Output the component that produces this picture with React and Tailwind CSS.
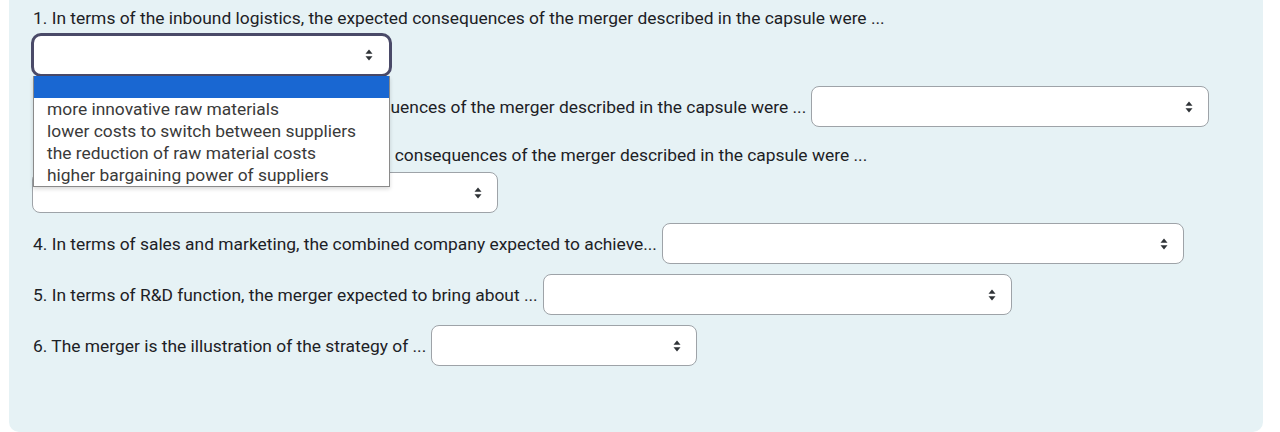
import React from "react";

function Caret() {
  return (
    <svg width="8" height="12" viewBox="0 0 8 12" className="shrink-0">
      <path d="M4 0.5 L7.5 4.8 L0.5 4.8 Z" fill="#2f3337" />
      <path d="M4 11.5 L7.5 7.2 L0.5 7.2 Z" fill="#2f3337" />
    </svg>
  );
}

function Select({ w }) {
  return (
    <div
      className="h-[41px] shrink-0 bg-white border border-[#9ea3a8] rounded-[8px] flex items-center justify-end pr-[15px]"
      style={{ width: w }}
    >
      <Caret />
    </div>
  );
}

export default function App() {
  return (
    <div className="w-[1280px] h-[432px] bg-white overflow-hidden" style={{ fontFamily: "Roboto, 'Liberation Sans', sans-serif" }}>
      <div className="relative ml-[9px] w-[1254px] h-[432px] bg-[#e6f2f5] rounded-b-[10px] pl-[24px] text-[#1d2125] text-[17.4px] leading-[24px]">
        <div className="pt-[6px] whitespace-nowrap">
          1. In terms of the inbound logistics, the expected consequences of the merger described in the capsule were ...
        </div>
        <div className="mt-[3px] ml-[-2px] w-[361px] h-[44px] bg-white border-[3px] border-[#4a4a68] rounded-[10px] flex items-center justify-end pr-[16px]">
          <Caret />
        </div>
        <div className="mt-[9px] flex items-center gap-[5px] whitespace-nowrap">
          <span>2. In terms of operations, the expected consequences of the merger described in the capsule were ...</span>
          <Select w={398} />
        </div>
        <div className="mt-[16px] whitespace-nowrap">
          3. In terms of outbound logistics, the expected consequences of the merger described in the capsule were ...
        </div>
        <div className="mt-[5px] -ml-[1px]">
          <Select w={466} />
        </div>
        <div className="mt-[10px] flex items-center gap-[5px] whitespace-nowrap">
          <span>4. In terms of sales and marketing, the combined company expected to achieve...</span>
          <Select w={522} />
        </div>
        <div className="mt-[10px] flex items-center gap-[5px] whitespace-nowrap">
          <span>5. In terms of R&amp;D function, the merger expected to bring about ...</span>
          <Select w={469} />
        </div>
        <div className="mt-[10px] flex items-center gap-[5px] whitespace-nowrap">
          <span>6. The merger is the illustration of the strategy of ...</span>
          <Select w={266} />
        </div>

        <div className="absolute left-[24px] top-[76px] w-[357px] bg-white border border-t-0 border-[#8a8a8a] shadow-[0_2px_4px_rgba(0,0,0,0.15)] text-[#3a3a3a] text-[17.4px] leading-[22px]">
          <div className="h-[22px] bg-[#1967d2]" />
          <div className="pl-[13px]">more innovative raw materials</div>
          <div className="pl-[13px]">lower costs to switch between suppliers</div>
          <div className="pl-[13px]">the reduction of raw material costs</div>
          <div className="pl-[13px]">higher bargaining power of suppliers</div>
        </div>
      </div>
    </div>
  );
}
